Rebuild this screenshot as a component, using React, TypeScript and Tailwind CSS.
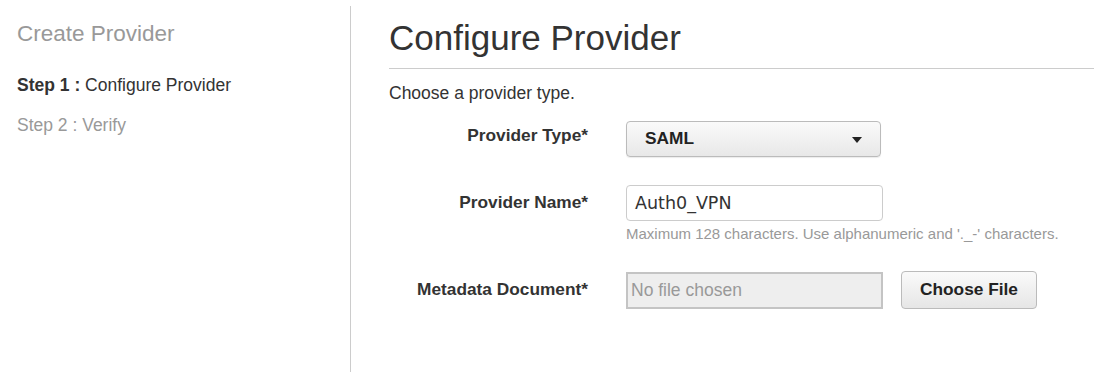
export default function App() {
  return (
    <div className="flex h-[372px] w-[1094px] bg-white font-['Liberation_Sans',Arial,sans-serif] text-[#333]">
      {/* sidebar */}
      <aside className="w-[350px] shrink-0 pl-[17px] pt-[20px]">
        <h2 className="text-[22.5px] leading-[28px] text-[#999]">Create Provider</h2>
        <ul className="mt-[27px] space-y-[20px] text-[17.5px] leading-[20px]">
          <li className="text-[#333]">
            <b>Step 1 :</b> Configure Provider
          </li>
          <li className="text-[#999]">Step 2 : Verify</li>
        </ul>
      </aside>
      <div className="mt-[6px] w-px bg-[#ccc]" />

      {/* main */}
      <main className="flex-1 pl-[38px] pt-[18px]">
        <h1 className="text-[35px] leading-[40px] text-[#333]">Configure Provider</h1>
        <hr className="mt-[10px] border-t border-[#ccc]" />
        <p className="mt-[14px] text-[17.5px] leading-[20px]">Choose a provider type.</p>

        <div className="mt-[18px] flex flex-col">
          <div className="flex items-center">
            <label className="mb-[6px] w-[199px] shrink-0 text-right text-[17.3px] font-bold">Provider Type*</label>
            <div className="ml-[38px] flex h-[36px] w-[255px] items-center justify-between rounded-[4px] border border-[#bbb] bg-gradient-to-b from-[#fafafa] to-[#e8e8e8] pl-[18px] pr-[18px] shadow-[0_1px_1px_rgba(0,0,0,0.08)]">
              <span className="text-[17.3px] font-bold text-[#222]">SAML</span>
              <svg width="10" height="6" viewBox="0 0 10 6" className="mt-[1px]">
                <path d="M0 0h10L5 6z" fill="#222" />
              </svg>
            </div>
          </div>

          <div className="mt-[28px] flex items-center">
            <label className="w-[199px] shrink-0 text-right text-[17.3px] font-bold">Provider Name*</label>
            <div className="ml-[38px] flex h-[36px] w-[257px] items-center rounded-[4px] border border-[#ccc] bg-white pl-[8px] font-['DejaVu_Sans',sans-serif] text-[17.5px] text-[#333]">
              Auth0_VPN
            </div>
          </div>
          <p className="ml-[237px] mt-[4px] text-[15px] leading-[18px] text-[#999]">
            Maximum 128 characters. Use alphanumeric and '._-' characters.
          </p>

          <div className="mt-[28px] flex items-center">
            <label className="w-[199px] shrink-0 text-right text-[17.3px] font-bold">Metadata Document*</label>
            <div className="ml-[38px] flex h-[37px] w-[257px] items-center border-2 border-[#c4c4c4] bg-[#eee] pl-[3px] text-[17.5px] text-[#999]">
              No file chosen
            </div>
            <button className="ml-[18px] h-[38px] w-[136px] rounded-[4px] border border-[#bbb] bg-gradient-to-b from-[#fafafa] to-[#e6e6e6] text-[17.3px] font-bold text-[#222]">
              Choose File
            </button>
          </div>
        </div>
      </main>
    </div>
  );
}
